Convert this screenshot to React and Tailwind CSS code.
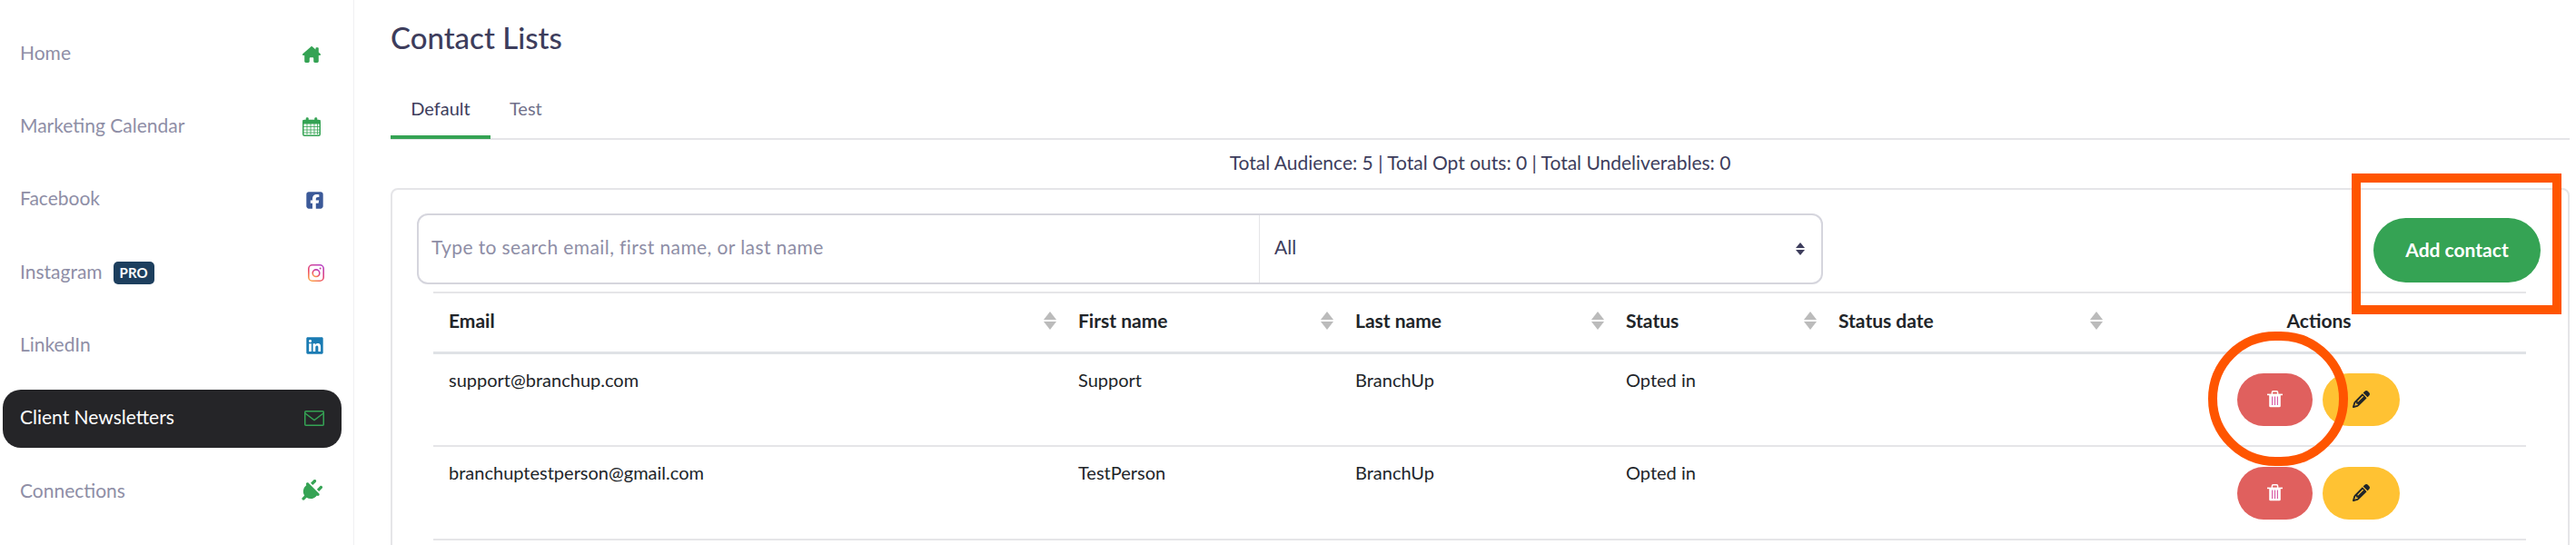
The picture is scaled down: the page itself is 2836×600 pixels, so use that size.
import React from 'react';
import { FaHouseChimney, FaPlug, FaPencil, FaSquareFacebook, FaLinkedin } from 'react-icons/fa6';

const navItems = [
  { label: 'Home', icon: <FaHouseChimney className="text-[20px] text-[#35a354]" />, iconClass: 'mr-[4px]' },
  { label: 'Marketing Calendar', icon: <CalendarIcon />, iconClass: 'mr-[4px]' },
  { label: 'Facebook', icon: <FaSquareFacebook className="text-[21px] text-[#3b5998]" /> },
  { label: 'Instagram', pro: true, icon: <InstagramIcon /> },
  { label: 'LinkedIn', icon: <FaLinkedin className="text-[21px] text-[#1a7bb3]" /> },
  { label: 'Client Newsletters', active: true, icon: <EnvelopeIcon /> },
  { label: 'Connections', icon: <FaPlug className="text-[26px] text-[#35a354] rotate-45" />, iconClass: 'mr-[2px]' },
];

const columns = [
  { label: 'Email', width: 'w-[693px]' },
  { label: 'First name', width: 'w-[305px]' },
  { label: 'Last name', width: 'w-[298px]' },
  { label: 'Status', width: 'w-[234px]' },
  { label: 'Status date', width: 'w-[315px]' },
];

const contacts = [
  { email: 'support@branchup.com', first: 'Support', last: 'BranchUp', status: 'Opted in' },
  { email: 'branchuptestperson@gmail.com', first: 'TestPerson', last: 'BranchUp', status: 'Opted in' },
];

function CalendarIcon() {
  return (
    <svg width="20" height="21" viewBox="0 0 20 21" fill="none" stroke="#35a354" className="block">
      <rect x="0.75" y="3.5" width="18.5" height="16.75" rx="1.5" strokeWidth="1.5" />
      <rect x="1" y="3.5" width="18" height="3.5" fill="#35a354" />
      <rect x="4" y="0.5" width="2.5" height="5" rx="1" fill="#35a354" strokeWidth="0.5" />
      <rect x="13.5" y="0.5" width="2.5" height="5" rx="1" fill="#35a354" strokeWidth="0.5" />
      <path d="M5 7v12M9 7v12M13 7v12M16.5 7v12M1 10.5h18M1 14h18M1 17h18" strokeWidth="0.8" />
    </svg>
  );
}

function InstagramIcon() {
  return (
    <svg width="18" height="19" viewBox="0 0 18 19" fill="none" className="block">
      <defs>
        <linearGradient id="insta" x1="0.8" y1="0" x2="0.2" y2="1">
          <stop offset="0" stopColor="#b93fc0" />
          <stop offset="0.6" stopColor="#ec4a6a" />
          <stop offset="1" stopColor="#fba04a" />
        </linearGradient>
      </defs>
      <rect x="0.8" y="0.8" width="16.4" height="17.4" rx="4" stroke="url(#insta)" strokeWidth="1.6" />
      <circle cx="9" cy="9.7" r="3.8" stroke="url(#insta)" strokeWidth="1.6" />
      <circle cx="13.6" cy="4.6" r="1" fill="#c13fa8" />
    </svg>
  );
}

function EnvelopeIcon() {
  return (
    <svg width="22" height="17" viewBox="0 0 22 17" fill="none" stroke="#35a354" strokeWidth="1.5" className="block">
      <rect x="0.75" y="0.75" width="20.5" height="15.5" rx="1" />
      <path d="M1 3l10 7.5L21 3" />
    </svg>
  );
}

function TrashIcon() {
  return (
    <svg width="17" height="19" viewBox="0 0 17 19" className="block">
      <path d="M0 3.6h17v1.6H0z" fill="#fff" />
      <path d="M5.4 4V2a1.2 1.2 0 0 1 1.2-1.2h3.8A1.2 1.2 0 0 1 11.6 2v2" fill="none" stroke="#fff" strokeWidth="1.5" />
      <path d="M2.2 4.6h12.6v12.2a1.5 1.5 0 0 1-1.5 1.5H3.7a1.5 1.5 0 0 1-1.5-1.5z" fill="#fff" />
      <path d="M5 6.6h1.2v9.4H5zM7.9 6.6h1.2v9.4H7.9zM10.8 6.6H12v9.4h-1.2z" fill="#d85fa8" />
    </svg>
  );
}

function SortArrows() {
  return (
    <span className="flex flex-col gap-[2px]">
      <span className="w-0 h-0 border-x-[7px] border-x-transparent border-b-[9px] border-b-[#bbbbbb]" />
      <span className="w-0 h-0 border-x-[7px] border-x-transparent border-t-[9px] border-t-[#bbbbbb]" />
    </span>
  );
}

export default function App() {
  return (
    <div className="relative flex h-[600px] overflow-hidden bg-white text-[#212529] font-['Lato',sans-serif]">
      <aside className="w-[390px] shrink-0 border-r border-[#f0f0f2] pt-[27.5px] pl-[3px] pr-[13px]">
        {navItems.map((item) => (
          <div
            key={item.label}
            className={`flex items-center justify-between h-[64px] mb-[16.3px] pl-[19px] pr-[19px] rounded-[20px] text-[21px] ${item.active ? 'bg-[#252528] text-white' : 'text-[#8e8ea6]'}`}
          >
            <span className="flex items-center gap-[12px]">
              <span className="pb-[4px]">{item.label}</span>
              {item.pro && (
                <span className="bg-[#1d3f5e] text-white text-[15px] font-bold rounded-[5px] px-[7px] leading-[25px]">PRO</span>
              )}
            </span>
            <span className={item.iconClass}>{item.icon}</span>
          </div>
        ))}
      </aside>

      <main className="flex-1 min-w-0 pl-[40px] pr-[7px]">
        <h1 className="mt-[20px] text-[33px] leading-[42px] font-medium text-[#3d3d5c]">Contact Lists</h1>

        <div className="mt-[46px] flex h-[46px] border-b-2 border-[#e5e5e8]">
          <div className="w-[110px] h-[45px] text-center text-[20px] leading-[22px] text-[#3d3d5c] border-b-4 border-[#35a354]">Default</div>
          <div className="ml-[21px] text-[20px] leading-[22px] text-[#70708a]">Test</div>
        </div>

        <p className="h-[53px] text-center text-[21px] leading-[50px] text-[#3d3d5c]">
          Total Audience: 5 | Total Opt outs: 0 | Total Undeliverables: 0
        </p>

        <div className="border-2 border-[#e5e5e8] rounded-t-[8px] pl-[27px] pr-[30px] pb-[40px]">
          <div className="flex items-start justify-between pt-[26px]">
            <div className="flex w-[1548px] h-[78px] border-2 border-[#d5d5dd] rounded-[12px]">
              <div className="w-[926px] pl-[14px] pb-[4px] border-r border-[#e5e5e8] flex items-center text-[21px] tracking-[0.4px] text-[#8e8ea6]">
                Type to search email, first name, or last name
              </div>
              <div className="flex-1 flex items-center justify-between pl-[16px] pr-[18px] text-[21px] text-[#3d3d5c]">
                <span className="pb-[4px]">All</span>
                <span className="flex flex-col gap-[2px]">
                  <span className="w-0 h-0 border-x-[5px] border-x-transparent border-b-[6px] border-b-[#3d3d5c]" />
                  <span className="w-0 h-0 border-x-[5px] border-x-transparent border-t-[6px] border-t-[#3d3d5c]" />
                </span>
              </div>
            </div>
            <button className="mt-[5px] w-[184px] h-[71px] pb-[2px] rounded-full bg-[#35a354] text-white text-[21px] font-bold">
              Add contact
            </button>
          </div>

          <table className="w-[2304px] ml-[18px] mt-[8px] table-fixed border-collapse text-[20px]">
            <thead>
              <tr className="border-t-2 border-b-[3px] border-[#e5e5e8] border-b-[#dfe2e6] h-[66px]">
                {columns.map((col) => (
                  <th key={col.label} className={`${col.width} pl-[17px] pr-[7px] pb-[4px] text-left text-[21px] font-bold`}>
                    <div className="flex items-center justify-between">
                      {col.label}
                      <SortArrows />
                    </div>
                  </th>
                ))}
                <th className="pl-[3px] pb-[4px] text-center text-[21px] font-bold">Actions</th>
              </tr>
            </thead>
            <tbody>
              {contacts.map((c) => (
                <tr key={c.email} className="border-b-2 border-[#e5e5e8] h-[103px]">
                  <td className="pl-[17px] pt-[13px] align-top">{c.email}</td>
                  <td className="pl-[17px] pt-[13px] align-top">{c.first}</td>
                  <td className="pl-[17px] pt-[13px] align-top">{c.last}</td>
                  <td className="pl-[17px] pt-[13px] align-top">{c.status}</td>
                  <td />
                  <td className="align-middle">
                    <div className="flex justify-center gap-[11px] pl-[2px]">
                      <button className="w-[83px] h-[58px] rounded-full bg-[#e0605e] flex items-center justify-center">
                        <TrashIcon />
                      </button>
                      <button className="w-[85px] h-[58px] rounded-full bg-[#ffc233] text-[#212529] flex items-center justify-center">
                        <FaPencil className="text-[19px]" />
                      </button>
                    </div>
                  </td>
                </tr>
              ))}
            </tbody>
          </table>
        </div>
      </main>

      <div className="absolute left-[2589px] top-[191px] w-[231px] h-[155px] border-[10px] border-[#ff5500]" />
      <div className="absolute left-[2431px] top-[365px] w-[154px] h-[148px] border-[10px] border-[#ff5500] rounded-full" />
    </div>
  );
}
